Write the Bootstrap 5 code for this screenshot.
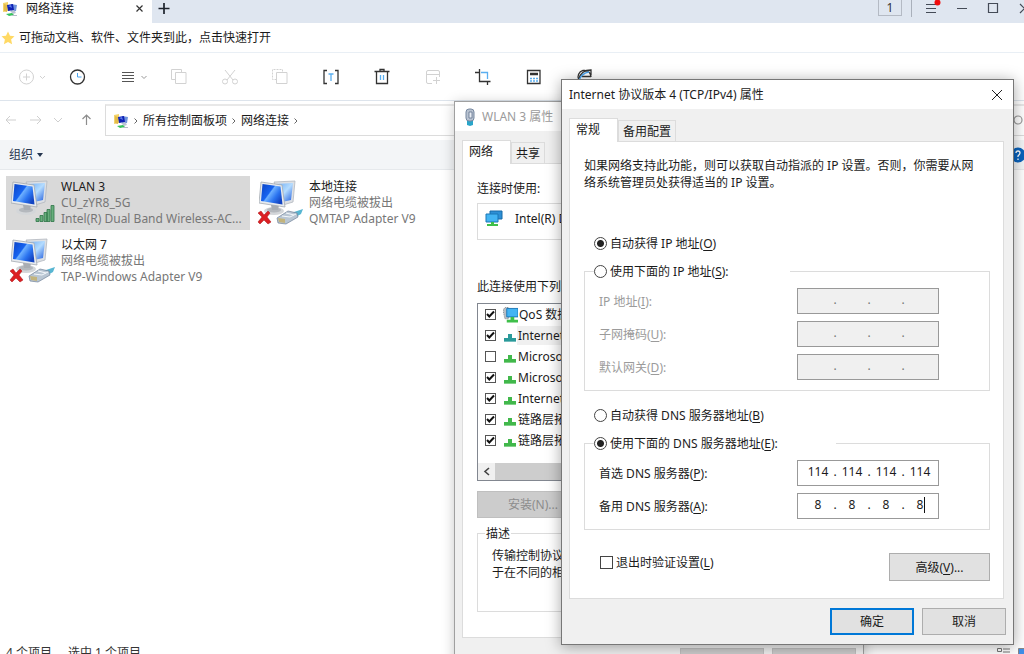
<!DOCTYPE html>
<html lang="zh-CN">
<head>
<meta charset="utf-8">
<meta name="viewport" content="width=device-width, initial-scale=1">
<title>网络连接</title>
<link href="https://cdn.jsdelivr.net/npm/bootstrap@5.3.0/dist/css/bootstrap.min.css" rel="stylesheet">
<style>
body{font:12px/17px "Noto Sans","Noto Sans CJK SC",sans-serif;color:#1b1b1b;background:#fff;overflow:hidden}
button,input{font:inherit;color:inherit}
svg{display:block;flex:none}
u{text-underline-offset:2px}
.explorer{height:100vh;overflow:hidden}
.plain{border:0;background:none;padding:0;border-radius:0}
/* title strip */
.titlestrip{height:23px;background:#dfe6f0;overflow:hidden}
.page-tab{width:152px;background:#fff;padding:0 9px 6px 2px}
.new-tab{padding:0 6px 6px}
.caption-area{margin-right:-16px;padding-bottom:6px}
.caption-area button{width:31px;height:17px}
.count-box{width:24px;height:17px;border:1px solid #b4bac4;border-top:0;margin:-2px 9px 0 0;text-align:center;line-height:17px;color:#333}
.bar-sep{width:1px;height:17px;background:#a9b0bb;margin-right:4px}
.fav-row{height:30px;border-bottom:1px solid #e9eff5;padding-left:1px}
.tool-row{height:48px;border-bottom:1px solid #dde4ec}
.addr-row{height:39px;padding-top:3px}
.nav-arrows{width:105px;padding-left:4px}
.path-box{height:32px;border:1px solid #dcdcdc;border-top:2px solid #e8e8e8;padding-left:7px}
.path-box a{color:#1b1b1b;text-decoration:none}
.find-box{width:130px;height:32px;border:1px solid #dcdcdc;border-top:2px solid #e8e8e8;border-right:0;margin-left:8px}
.org-row{height:30px;background:#f3f5f7;border-bottom:1px solid #e6e9ec;padding-left:9px;color:#26364f}
.org-row .dropdown-toggle::after{margin-left:4px;vertical-align:2px;border-width:4px 3px 0}
.files{display:grid;grid-template-columns:244px 244px;column-gap:4px;row-gap:4px;padding:6px;align-content:start}
.conn{height:54px;padding:2px 4px}
.conn.picked{background:#d9d9d9}
.conn .txt{line-height:16px;margin:1px 0 0 12px;color:#777;min-width:0}
.conn .txt b{font-weight:400;color:#1b1b1b}
.statusline{height:9px;color:#333;padding-left:6px;overflow:hidden;line-height:16px}
/* dialogs */
.dlg{position:absolute;background:#f0f0f0;border:1px solid #8f8f8f;box-shadow:0 2px 14px rgba(0,0,0,.35);padding:0 7px}
.dlg-ip{left:561px;top:79px;width:453px;padding-bottom:9px;border-color:#777}
.dlg-wlan{left:454px;top:101px;width:410px;border-color:#a0a0a0;box-shadow:0 2px 12px rgba(0,0,0,.22)}
.dlg-head{height:29px;background:#fff;margin:0 -7px 9px;padding:0 10px 0 7px}
.tabs button{border:1px solid #dcdcdc;border-bottom:0;background:#f0f0f0;height:21px;padding:0 4px}
.tabs button.on{background:#fff;height:24px;width:49px;padding:0 0 2px 6px;text-align:left;margin-bottom:-1px;z-index:1}
.sheet{background:#fff;border:1px solid #dcdcdc;padding:15px 13px 17px 14px;margin-right:2px}
.sheet .intro{margin-bottom:43px}
.opt{height:18px;gap:3px}
.opt input[type=radio],.opt input[type=checkbox]{appearance:none;width:13px;height:13px;border:1px solid #444;background:#fff;margin:0;flex:none}
.opt input[type=radio]{border-radius:50%}
.opt input[type=radio]:checked{background:radial-gradient(circle,#222 0 3px,#fff 4px)}
.lead-opt{margin:0 0 10px 10px}
.second{margin-top:15px}
fieldset.group{border:1px solid #dcdcdc;padding:8px 50px 10px 14px}
fieldset.group legend{float:none;font-size:12px;line-height:17px;margin:0 0 0 -5px;padding:0;width:196px}
fieldset.group legend.wide{width:242px}
.ip-line{height:26px;margin-bottom:7px}
.ip-line:last-child{margin-bottom:0}
.ip-box{width:142px;height:26px;border:1px solid #999;background:#fff;padding:0 3px 3px 5px}
.ip-box input{width:30px;border:0;padding:0;background:none;text-align:center;height:18px}
.ip-box i{width:4px;font-style:normal;text-align:center}
.off{color:#9b9b9b}
.off .ip-box{background:#f0f0f0;color:#777}
.caret{position:absolute;right:13px;top:3px;width:1px;height:16px;background:#111}
.wbtn{background:#e1e1e1;border:1px solid #adadad;height:27px;width:84px;padding:0}
.wbtn.prime{border:2px solid #0078d7}
.wbtn.long{width:101px;height:28px}
.wbtn.install{width:112px}
.wbtn.dim{background:#ccc;border-color:#bfbfbf;color:#8c8c8c}
.verify-row{margin-top:23px}
.foot-ip{margin-top:9px}
.sheet-net{padding:16px 14px 25px}
.adapter{height:37px;border:1px solid #dcdcdc;padding:0 0 6px 7px;margin:6px 0 38px}
.items{height:178px;border:1px solid #828790;margin:8px 0 10px}
.items li{height:21px}
.items li label{line-height:19px;padding-left:1px;white-space:nowrap}
.items li.cur label{background:#f0f0f0}
.items input{appearance:none;width:11px;height:11px;border:1px solid #555;margin:0 7px 0 7px;background:#fff}
.items input:checked{background:#fff url("data:image/svg+xml,%3Csvg xmlns='http://www.w3.org/2000/svg' viewBox='0 0 9 9'%3E%3Cpath d='M1 4l2.300 2.500L8 1.500' fill='none' stroke='%23111' stroke-width='2'/%3E%3C/svg%3E") center/9px no-repeat}
.hscroll{height:17px;background:#f0f0f0}
.hscroll span{background:#cdcdcd}
fieldset.about{border:1px solid #dcdcdc;height:87px;padding:5px 14px;margin-top:7px}
fieldset.about legend{float:none;width:auto;font-size:12px;line-height:17px;margin:0 0 0 -7px;padding:0 1px}
.foot-net{margin:10px 0;gap:8px}
</style>
</head>
<body>
<svg width="0" height="0" class="position-absolute" aria-hidden="true">
  <defs>
    <linearGradient id="scr" x1="0" y1="0" x2="1" y2=".7"><stop offset="0" stop-color="#0b43c4"/><stop offset=".45" stop-color="#1663f0"/><stop offset=".5" stop-color="#6db0ff"/><stop offset=".75" stop-color="#2b74f0"/><stop offset="1" stop-color="#1445c2"/></linearGradient>
    <linearGradient id="scr2" x1="0" y1="0" x2="1" y2="1"><stop offset="0" stop-color="#6aa9f2"/><stop offset=".5" stop-color="#b4dcff"/><stop offset="1" stop-color="#1c5ade"/></linearGradient>
    <symbol id="netfolder" viewBox="0 0 16 16"><path d="M1 2l5-1v9l-5 1z" fill="#f3d46b"/><path d="M2 3l3 1v7l-3-1z" fill="#e3bb4a"/><path d="M9 3l6 1-1 6-5 1z" fill="#6f92dc"/><path d="M5 4l6-1 1 6-6 1z" fill="#0d1fb4"/><path d="M6 5l3-1 1 3z" fill="#5a7bea"/><path d="M8 10l4-1 2 3-3 1z" fill="#b9c3d3"/><path d="M4 13l6-1 2 2-5 1z" fill="#35c25c"/><path d="M10 14h5v1h-5z" fill="#b5bcc6"/></symbol>
    <symbol id="monitors" viewBox="0 0 46 46"><ellipse cx="15" cy="31" rx="10" ry="4" fill="#d3d6d9"/><ellipse cx="15" cy="30" rx="7" ry="2.500" fill="#b4b8bd"/><path d="M12 25h8l-1 5h-6z" fill="#a9adb3"/><path d="M15 2l21-1-2 21-10 3z" fill="#dde0e4" stroke="#b3b8bf" stroke-width=".8"/><path d="M17 4l17-1-2 17-9 2z" fill="url(#scr2)"/><path d="M2 2l21 3 3 22L0 23z" fill="#e8ebee" stroke="#a3a9b1" stroke-width=".8"/><path d="M3.500 4l18 2.500 2 18L2 21z" fill="url(#scr)"/></symbol>
    <symbol id="signal" viewBox="0 0 20 18"><g fill="#67ad7c" stroke="#2e7547" stroke-width=".8"><path d="M1 14h3v3H1zM5 11h3v6H5zM9 8h3v9H9zM12 5h3v12h-3zM16 1h3v16h-3z"/></g></symbol>
    <symbol id="plug" viewBox="0 0 46 18"><path d="M1 5l3-2 3 4 4-4 2 2-3 4 4 5-3 2-4-4-4 4-2-2 4-5z" fill="#dc1f22" stroke="#a90f12" stroke-width=".5"/><path d="M34 5l12-4-2 5-7 4z" fill="#58b6d2"/><path d="M20 10l11-7 9 2 1 4-12 7-8-1z" fill="#b9c6d3" stroke="#71839a" stroke-width=".7"/><path d="M21 10l7 1v4l-6-1z" fill="#c3b47d"/><path d="M25 8l8 1 6-3M29 5l8 2" stroke="#f4f8fb" fill="none"/></symbol>
    <symbol id="proto" viewBox="0 0 14 14"><path d="M5 5h4v4h4v4H1V9h4z" fill="currentColor"/><path d="M1 12h12v1H1z" fill="#fff" opacity=".35"/></symbol>
    <symbol id="pc" viewBox="0 0 18 18"><path d="M5 1h12v8H5z" fill="#2d8fd5" stroke="#176aa8"/><path d="M1 4h12v8H1z" fill="#43b4f3" stroke="#1b76b6"/><path d="M6 12h3v2h4v2H2v-2h4z" fill="#3fbf4a"/></symbol>
    <symbol id="qos" viewBox="0 0 18 18"><path d="M1 4l2-3h4v12H3z" fill="#b8bec4" stroke="#7d858d" stroke-dasharray="1 1"/><path d="M5 2h12v9H5z" fill="#43b4f3" stroke="#1b76b6"/><path d="M9 11h4v3h4v3H5v-3h4z" fill="#3fbf4a"/></symbol>
    <symbol id="chev" viewBox="0 0 6 8"><path d="M1.500 1.500l2.500 2.500-2.500 2.500" fill="none" stroke="#666"/></symbol>
  </defs>
</svg>

<main class="explorer d-flex flex-column position-relative">
  <header class="titlestrip d-flex align-items-stretch flex-shrink-0">
    <div class="page-tab d-flex align-items-center">
      <svg width="16" height="16"><use href="#netfolder"/></svg>
      <span class="ms-2 flex-grow-1">网络连接</span>
      <button class="plain" aria-label="关闭标签"><svg width="7" height="7" viewBox="0 0 7 7"><path d="M.5.5l6 6m0-6l-6 6" stroke="#333" stroke-width="1.200"/></svg></button>
    </div>
    <button class="plain new-tab" aria-label="新标签"><svg width="12" height="12" viewBox="0 0 12 12"><path d="M6 0v11M.5 5.500h11" stroke="#1d232c" stroke-width="1.700"/></svg></button>
    <div class="caption-area d-flex align-items-center ms-auto">
      <span class="count-box">1</span><span class="bar-sep"></span>
      <button class="plain" aria-label="菜单"><svg width="31" height="17" viewBox="0 0 31 17"><path d="M10 4.500h10M10 8.500h10M10 12.500h10" stroke="#444b57"/><circle cx="21.500" cy="2.500" r="3" fill="#f20c0c"/></svg></button>
      <button class="plain" aria-label="最小化"><svg width="31" height="17" viewBox="0 0 31 17"><path d="M10 8.500h10" stroke="#444b57"/></svg></button>
      <button class="plain" aria-label="最大化"><svg width="31" height="17" viewBox="0 0 31 17"><path d="M10.500 3.500h9v9h-9z" fill="none" stroke="#444b57" stroke-width="1.200"/></svg></button>
      <button class="plain" aria-label="关闭"><svg width="31" height="17" viewBox="0 0 31 17"><path d="M11 4l9 9m0-9l-9 9" stroke="#444b57" stroke-width="1.200"/></svg></button>
    </div>
  </header>

  <div class="fav-row d-flex align-items-center flex-shrink-0">
    <svg width="14" height="14" viewBox="0 0 14 14"><path d="M7 .5l2 4.300 4.500.5-3.400 3.200 1 4.800L7 11l-4.100 2.300 1-4.800L.5 5.300l4.500-.5z" fill="#ffd964"/></svg>
    <span class="ms-1">可拖动文档、软件、文件夹到此，点击快速打开</span>
  </div>

  <div class="tool-row d-flex align-items-center flex-shrink-0">
    <button class="plain" aria-label="新建"><svg width="51" height="24" viewBox="0 0 51 24" fill="none" stroke="#d2d2d2"><circle cx="26.500" cy="12" r="7"/><path d="M23 12h7M26.500 8.500v7M40 11l2.500 2.500L45 11"/></svg></button>
    <button class="plain" aria-label="历史"><svg width="51" height="24" viewBox="0 0 51 24" fill="none"><circle cx="26.500" cy="12" r="7" stroke="#333" stroke-width="1.300"/><path d="M26.500 8v4h4" stroke="#4aa3ee"/></svg></button>
    <button class="plain" aria-label="视图"><svg width="51" height="24" viewBox="0 0 51 24" fill="none" stroke="#555"><path d="M20 7.500h12M20 10.500h12M20 13.500h12M20 16.500h12"/><path d="M39.500 11l2.500 2.500L44.500 11" stroke="#999"/></svg></button>
    <button class="plain" aria-label="复制"><svg width="51" height="24" viewBox="0 0 51 24" fill="none" stroke="#d2d2d2"><path d="M22.500 14.500h-4v-10h10v3M22.500 7.500H33v11H22.500z"/></svg></button>
    <button class="plain" aria-label="剪切"><svg width="51" height="24" viewBox="0 0 51 24" fill="none" stroke="#d2d2d2"><path d="M21 5l8 10M31 5l-8 10"/><circle cx="21" cy="16.500" r="2.500"/><circle cx="31" cy="16.500" r="2.500"/></svg></button>
    <button class="plain" aria-label="粘贴"><svg width="51" height="24" viewBox="0 0 51 24" fill="none" stroke="#d2d2d2"><path d="M21.500 14.500h-4v-10h10v3" stroke-dasharray="2 1"/><path d="M21.500 7.500h10.500v11h-10.500z"/></svg></button>
    <button class="plain" aria-label="重命名"><svg width="51" height="24" viewBox="0 0 51 24" fill="none" stroke="#333" stroke-width="1.300"><path d="M21 5.500h-3v13h3M29 5.500h3v13h-3"/><path d="M22.500 9h5M25 9v7" stroke="#5aaef0"/></svg></button>
    <button class="plain" aria-label="删除"><svg width="51" height="24" viewBox="0 0 51 24" fill="none" stroke="#333" stroke-width="1.300"><path d="M17.500 6.500h15M23 6.500v-2h4v2M19.500 6.500v12h11v-12"/><path d="M23.500 10v5M26.500 10v5" stroke="#5aaef0"/></svg></button>
    <button class="plain" aria-label="新建窗口"><svg width="51" height="24" viewBox="0 0 51 24" fill="none" stroke="#d2d2d2"><path d="M24 18.500h-4q-1.500 0-1.500-1.500V7q0-1.500 1.500-1.500h10q1.500 0 1.500 1.500v5M18.500 9.500h13M25 15.500h7M28.500 12v7"/></svg></button>
    <button class="plain" aria-label="裁剪"><svg width="51" height="24" viewBox="0 0 51 24" fill="none" stroke="#333" stroke-width="1.300"><path d="M20.500 4v12.500h11M16 7.500h4M28.500 16.500V20"/><path d="M22 7.500h6.500V14" stroke="#5aaef0"/></svg></button>
    <button class="plain" aria-label="计算器"><svg width="51" height="24" viewBox="0 0 51 24" fill="none" stroke="#333" stroke-width="1.300"><path d="M17.500 5.500H30v13H17.500z"/><path d="M20 9h8" stroke-width="2.500"/><path d="M20 13.500h8M20 16h8" stroke="#5aaef0" stroke-dasharray="2 1"/></svg></button>
    <button class="plain" aria-label="浏览器"><svg width="51" height="24" viewBox="0 0 51 24" fill="none" stroke="#333" stroke-width="1.300"><path d="M30 12a6.500 6.500 0 1 0-2 4.500M21 11.500h9M18 14Q20 5 30 5v5"/><path d="M18 15q3-7 10-8" stroke="#4aa3ee"/></svg></button>
  </div>

  <div class="addr-row d-flex align-items-start flex-shrink-0">
    <div class="nav-arrows d-flex align-items-center pt-1">
      <button class="plain" aria-label="后退"><svg width="24" height="24" viewBox="0 0 24 24" fill="none" stroke="#cfcfcf"><path d="M12 12H2M6 8l-4 4 4 4"/></svg></button>
      <button class="plain" aria-label="前进"><svg width="24" height="24" viewBox="0 0 24 24" fill="none" stroke="#cfcfcf"><path d="M2 12h11M9 8l4 4-4 4"/></svg></button>
      <button class="plain" aria-label="最近"><svg width="24" height="24" viewBox="0 0 24 24" fill="none" stroke="#cfcfcf"><path d="M2 10l4 4 4-4"/></svg></button>
      <button class="plain" aria-label="向上"><svg width="24" height="24" viewBox="0 0 24 24" fill="none" stroke="#8d8d8d" stroke-width="1.200"><path d="M10.500 17V7M6.500 11l4-4 4 4"/></svg></button>
    </div>
    <nav class="path-box flex-grow-1 d-flex align-items-center" aria-label="路径">
      <svg width="16" height="16"><use href="#netfolder"/></svg>
      <svg class="ms-1 me-1" width="6" height="8"><use href="#chev"/></svg><a href="#">所有控制面板项</a>
      <svg class="ms-1 me-1" width="6" height="8"><use href="#chev"/></svg><a href="#">网络连接</a>
      <svg class="ms-1" width="6" height="8"><use href="#chev"/></svg>
    </nav>
    <div class="find-box d-flex align-items-center justify-content-end"><svg width="14" height="14" viewBox="0 0 14 14"><circle cx="8" cy="6" r="4" fill="none" stroke="#999" stroke-width="1.200"/></svg></div>
  </div>

  <div class="org-row d-flex align-items-center flex-shrink-0">
    <button class="plain dropdown-toggle">组织</button>
    <svg class="ms-auto" width="14" height="16" viewBox="0 0 14 16" role="img" aria-label="帮助"><circle cx="8" cy="8" r="7.500" fill="#0a63bd"/><path d="M6 6q0-2 2-2t2 2q0 1-2 3v1M8 11.500v1.500" fill="none" stroke="#fff" stroke-width="1.300"/></svg>
  </div>

  <section class="files flex-grow-1">
    <div class="conn picked d-flex">
      <div><svg width="39" height="48" viewBox="0 0 39 48" overflow="visible"><use href="#monitors" x="1" y="2" width="46" height="46"/><use href="#signal" x="25" y="26" width="20" height="19"/></svg></div>
      <div class="txt"><b>WLAN 3</b><div>CU_zYR8_5G</div><div class="text-nowrap">Intel(R) Dual Band Wireless-AC...</div></div>
    </div>
    <div class="conn d-flex">
      <div><svg width="39" height="48" viewBox="0 0 39 48" overflow="visible"><use href="#monitors" x="1" y="2" width="46" height="46"/><use href="#plug" x="-1" y="30" width="46" height="18"/></svg></div>
      <div class="txt"><b>本地连接</b><div>网络电缆被拔出</div><div class="text-nowrap">QMTAP Adapter V9</div></div>
    </div>
    <div class="conn d-flex">
      <div><svg width="39" height="48" viewBox="0 0 39 48" overflow="visible"><use href="#monitors" x="1" y="2" width="46" height="46"/><use href="#plug" x="-1" y="30" width="46" height="18"/></svg></div>
      <div class="txt"><b>以太网 7</b><div>网络电缆被拔出</div><div class="text-nowrap">TAP-Windows Adapter V9</div></div>
    </div>
  </section>

  <footer class="statusline d-flex flex-shrink-0"><span>4 个项目</span><span class="ms-3">选中 1 个项目</span>
    <svg class="ms-auto" width="28" height="9" viewBox="0 0 28 9"><path d="M1.500 3.500h4v3h-4zM7 4h7M7 7h7" stroke="#777" fill="none"/><path d="M22.500 3.500h6v6h-6z" fill="#3f8fe8" stroke="#888"/></svg>
  </footer>

  <section class="dlg dlg-wlan" aria-label="WLAN 3 属性">
    <div class="dlg-head d-flex align-items-center off">
      <svg width="16" height="18" viewBox="0 0 16 18"><path d="M5 12h6v5l-3 1-3-1z" fill="#2aa5c9"/><rect x="4" y="1" width="8" height="12" rx="3" fill="#b8c2d0" stroke="#7688a0"/><path d="M7 4h3v6H7z" fill="#e8edf3" stroke="#60728d" stroke-width=".8"/></svg>
      <span class="ms-1">WLAN 3 属性</span>
    </div>
    <div class="tabs d-flex align-items-end"><button class="on position-relative">网络</button><button>共享</button></div>
    <div class="sheet sheet-net">
      <div>连接时使用:</div>
      <div class="adapter d-flex align-items-center"><svg width="18" height="18"><use href="#pc"/></svg><span class="ms-2 ps-1">Intel(R) Dual Band Wireless-AC</span></div>
      <div>此连接使用下列项目:</div>
      <div class="items d-flex flex-column">
        <ul class="list-unstyled mb-0 flex-grow-1">
          <li class="d-flex align-items-center"><input id="p1" type="checkbox" checked><svg width="15" height="18" viewBox="1 0 16 18"><use href="#qos" width="18" height="18"/></svg><label for="p1">QoS 数据包计划程序</label></li>
          <li class="cur d-flex align-items-center"><input id="p2" type="checkbox" checked><svg width="14" height="14" color="#2a9a9a"><use href="#proto"/></svg><label for="p2">Internet 协议版本 4</label></li>
          <li class="d-flex align-items-center"><input id="p3" type="checkbox"><svg width="14" height="14" color="#41b84b"><use href="#proto"/></svg><label for="p3">Microsoft 网络适配器</label></li>
          <li class="d-flex align-items-center"><input id="p4" type="checkbox" checked><svg width="14" height="14" color="#41b84b"><use href="#proto"/></svg><label for="p4">Microsoft LLDP</label></li>
          <li class="d-flex align-items-center"><input id="p5" type="checkbox" checked><svg width="14" height="14" color="#41b84b"><use href="#proto"/></svg><label for="p5">Internet 协议版本 6</label></li>
          <li class="d-flex align-items-center"><input id="p6" type="checkbox" checked><svg width="14" height="14" color="#41b84b"><use href="#proto"/></svg><label for="p6">链路层拓扑发现响应程序</label></li>
          <li class="d-flex align-items-center"><input id="p7" type="checkbox" checked><svg width="14" height="14" color="#41b84b"><use href="#proto"/></svg><label for="p7">链路层拓扑发现映射器</label></li>
        </ul>
        <div class="hscroll d-flex"><svg width="17" height="17" viewBox="0 0 17 17"><path d="M11 5L7 8.500l4 3.500" fill="none" stroke="#444" stroke-width="1.600"/></svg><span class="flex-grow-1"></span></div>
      </div>
      <button class="wbtn install dim">安装(N)...</button>
      <fieldset class="about"><legend>描述</legend>传输控制协议/Internet 协议。<br>于在不同的相互连接的网络上通信。</fieldset>
    </div>
    <div class="foot-net d-flex justify-content-end"><button class="wbtn dim" aria-label="确定"></button><button class="wbtn dim" aria-label="取消"></button></div>
  </section>

  <section class="dlg dlg-ip" role="dialog" aria-label="Internet 协议版本 4 (TCP/IPv4) 属性">
    <div class="dlg-head d-flex align-items-center justify-content-between">
      <span>Internet 协议版本 4 (TCP/IPv4) 属性</span>
      <button class="plain" aria-label="关闭"><svg width="12" height="12" viewBox="0 0 12 12"><path d="M1 1l10 10m0-10L1 11" stroke="#222"/></svg></button>
    </div>
    <div class="tabs d-flex align-items-end"><button class="on position-relative">常规</button><button>备用配置</button></div>
    <form class="sheet" onsubmit="return false">
      <p class="intro text-nowrap">如果网络支持此功能，则可以获取自动指派的 IP 设置。否则，你需要从网<br>络系统管理员处获得适当的 IP 设置。</p>
      <div class="opt lead-opt d-flex align-items-center"><input type="radio" name="ip" id="r1" checked><label for="r1">自动获得 IP 地址(<u>O</u>)</label></div>
      <fieldset class="group">
        <legend class="opt d-flex align-items-center"><input type="radio" name="ip" id="r2"><label for="r2">使用下面的 IP 地址(<u>S</u>):</label></legend>
        <div class="ip-line off d-flex align-items-center justify-content-between"><label for="a1">IP 地址(<u>I</u>):</label><div class="ip-box d-flex align-items-center"><input id="a1" disabled><i>.</i><input aria-label="2" disabled><i>.</i><input aria-label="3" disabled><i>.</i><input aria-label="4" disabled></div></div>
        <div class="ip-line off d-flex align-items-center justify-content-between"><label for="b1">子网掩码(<u>U</u>):</label><div class="ip-box d-flex align-items-center"><input id="b1" disabled><i>.</i><input aria-label="2" disabled><i>.</i><input aria-label="3" disabled><i>.</i><input aria-label="4" disabled></div></div>
        <div class="ip-line off d-flex align-items-center justify-content-between"><label for="c1">默认网关(<u>D</u>):</label><div class="ip-box d-flex align-items-center"><input id="c1" disabled><i>.</i><input aria-label="2" disabled><i>.</i><input aria-label="3" disabled><i>.</i><input aria-label="4" disabled></div></div>
      </fieldset>
      <div class="opt lead-opt second d-flex align-items-center"><input type="radio" name="dns" id="r3"><label for="r3">自动获得 DNS 服务器地址(<u>B</u>)</label></div>
      <fieldset class="group">
        <legend class="opt wide d-flex align-items-center"><input type="radio" name="dns" id="r4" checked><label for="r4">使用下面的 DNS 服务器地址(<u>E</u>):</label></legend>
        <div class="ip-line d-flex align-items-center justify-content-between"><label for="d1">首选 DNS 服务器(<u>P</u>):</label><div class="ip-box d-flex align-items-center"><input id="d1" value="114"><i>.</i><input aria-label="2" value="114"><i>.</i><input aria-label="3" value="114"><i>.</i><input aria-label="4" value="114"></div></div>
        <div class="ip-line d-flex align-items-center justify-content-between"><label for="e1">备用 DNS 服务器(<u>A</u>):</label><div class="ip-box d-flex align-items-center position-relative"><input id="e1" value="8"><i>.</i><input aria-label="2" value="8"><i>.</i><input aria-label="3" value="8"><i>.</i><input aria-label="4" value="8"><span class="caret"></span></div></div>
      </fieldset>
      <div class="verify-row d-flex justify-content-between align-items-start">
        <div class="opt d-flex align-items-center ms-3"><input type="checkbox" id="v1"><label for="v1">退出时验证设置(<u>L</u>)</label></div>
        <button class="wbtn long">高级(<u>V</u>)...</button>
      </div>
    </form>
    <div class="foot-ip d-flex justify-content-end gap-2"><button class="wbtn prime">确定</button><button class="wbtn">取消</button></div>
  </section>
</main>
<script src="https://cdn.jsdelivr.net/npm/bootstrap@5.3.0/dist/js/bootstrap.bundle.min.js"></script>
</body>
</html>
